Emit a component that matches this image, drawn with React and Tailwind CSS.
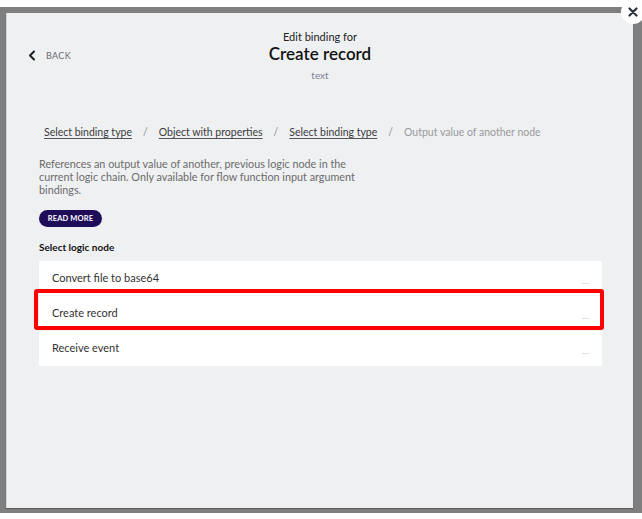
import React from 'react';

const crumbs = [
  { label: 'Select binding type', link: true },
  { label: 'Object with properties', link: true },
  { label: 'Select binding type', link: true },
  { label: 'Output value of another node', link: false },
];

const nodes = ['Convert file to base64', 'Create record', 'Receive event'];

const ChevronLeft = () => (
  <svg width="8" height="11" viewBox="0 0 8 11" fill="none">
    <path d="M6 1.5L2 5.5L6 9.5" stroke="#1f1f1f" strokeWidth="2" strokeLinecap="round" strokeLinejoin="round" />
  </svg>
);

const App = () => {
  return (
    <div className="w-[642px] h-[519px] bg-white overflow-hidden" style={{ fontFamily: 'Lato, "Noto Sans", sans-serif' }}>
      {/* dimmed overlay */}
      <div className="mt-[7px] h-[506px] bg-[#7f7f7f] pl-[6px] pr-[9px] pt-[6px]">
        <div className="relative h-[495px] bg-[#eff0f2] border-l border-[#d4d5d8] shadow-[0_1px_1px_rgba(0,0,0,0.25)]">
          {/* close button */}
          <button className="absolute -top-[13px] -right-[12px] w-[24px] h-[24px] rounded-full bg-white flex items-center justify-center">
            <svg width="10" height="10" viewBox="0 0 10 10">
              <path d="M1.5 1.5L8.5 8.5M8.5 1.5L1.5 8.5" stroke="#2b2f3a" strokeWidth="2.2" strokeLinecap="round" />
            </svg>
          </button>

          {/* Header */}
          <div className="grid grid-cols-[1fr_auto_1fr] pt-[17px]">
            <div className="flex items-center gap-[10px] pl-[21px] mt-[19px] self-start h-[12px]">
              <ChevronLeft />
              <span className="text-[9px] tracking-[0.04em] text-[#6a6a6a] leading-none">BACK</span>
            </div>
            <div className="flex flex-col items-center">
              <span className="text-[11px] leading-[14px] text-[#222]">Edit binding for</span>
              <span className="text-[17px] leading-[20px] font-semibold text-[#111]">Create record</span>
              <span className="mt-[4px] text-[10px] leading-[14px] text-[#7b8396]">text</span>
            </div>
            <div />
          </div>

          <div className="pl-[32px] pr-[31px]">
            {/* Breadcrumb */}
            <div className="mt-[42px] pl-[5px] flex items-center text-[10.5px] leading-[16px]">
              {crumbs.map((c, i) => (
                <React.Fragment key={i}>
                  {i > 0 && <span className="mx-[11px] text-[#8a8a8a]">/</span>}
                  {c.link ? (
                    <span className="text-[#3b3b3b] underline underline-offset-2 decoration-[#555]">{c.label}</span>
                  ) : (
                    <span className="text-[#9a9a9a]">{c.label}</span>
                  )}
                </React.Fragment>
              ))}
            </div>

            {/* Description */}
            <p className="mt-[17px] w-[335px] text-[10.8px] leading-[13px] text-[#6b6b6b]">
              References an output value of another, previous logic node in the current logic chain. Only available for flow function input argument bindings.
            </p>

            <button className="mt-[14px] h-[17px] w-[63px] rounded-full bg-[#200d5a] text-white text-[7.5px] font-bold tracking-[0.02em] flex items-center justify-center">
              READ MORE
            </button>

            <div className="mt-[13px] text-[10px] leading-[14px] font-bold text-[#111]">Select logic node</div>

            {/* Logic node list */}
            <div className="relative mt-[7px] bg-white">
              {nodes.map((n, i) => (
                <div key={n} className={`h-[35px] flex items-center justify-between pl-[13px] pr-[13px] ${i < nodes.length - 1 ? 'border-b border-[#f1f1f3]' : ''}`}>
                  <span className="text-[11px] text-[#333]">{n}</span>
                  <span className="text-[8px] text-[#b9b9b9] mt-[5px] tracking-[0.05em]">...</span>
                </div>
              ))}
              {/* highlight annotation */}
              <div className="absolute top-[28px] -left-[5px] w-[570px] h-[41px] border-[4px] border-[#ff0000] rounded-[3px] pointer-events-none" />
            </div>
          </div>
        </div>
      </div>
    </div>
  );
};

export default App;
